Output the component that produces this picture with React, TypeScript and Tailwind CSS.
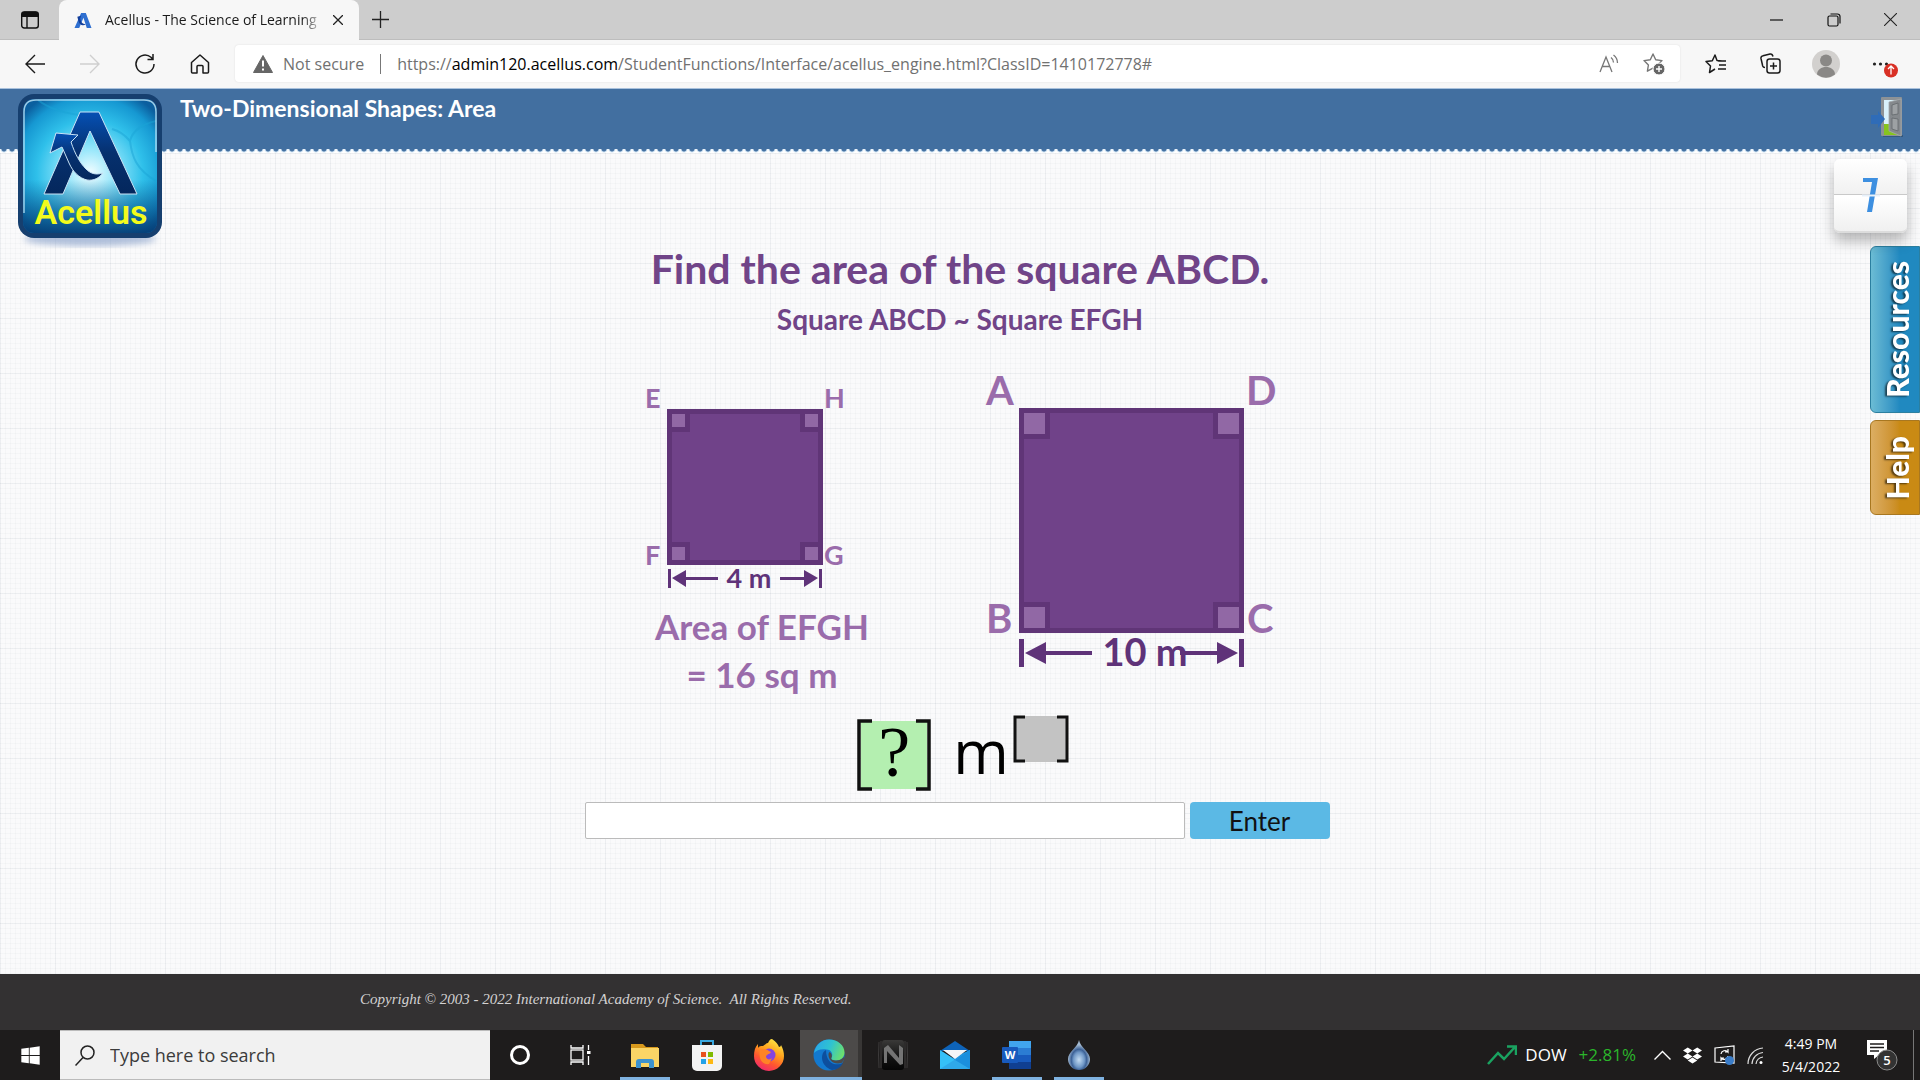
import React from "react";
import { FaDropbox, FaWindows } from "react-icons/fa";

/* ---------- browser chrome ---------- */

function AcellusMark({ className }: { className: string }) {
  return (
    <svg viewBox="0 0 20 18" className={className} aria-hidden="true">
      <path d="M8 1h5l6 16h-5L10.500 6 6 17H1z" fill="#2f6fd0" />
      <path d="M4 5l4-1-1 3c1 4 2 6 6 6-3 2-7 1-8-4z" fill="#123f9c" />
    </svg>
  );
}

function TabStrip() {
  return (
    <div className="flex h-10 items-stretch border-b border-[#bdbdbd] bg-[#cdcdcd]">
      <button aria-label="Tab actions" className="flex w-[59px] items-center justify-center">
        <svg width="20" height="20" viewBox="0 0 20 20" fill="none" stroke="#111">
          <rect x="1.700" y="2" width="16.600" height="16" rx="2.500" strokeWidth="1.400" />
          <path d="M2 4.500a2.500 2.500 0 0 1 2.500-2.500h11A2.500 2.500 0 0 1 18 4.500V6.500H2z" fill="#111" />
          <path d="M7 6v12" strokeWidth="1.400" />
        </svg>
      </button>
      <div className="-mb-px flex w-[300px] items-center rounded-t-lg bg-[#f7f7f7] pr-[7px] pl-3.5">
        <AcellusMark className="h-[17px] w-5 shrink-0" />
        <span className="ml-3 flex-1 overflow-hidden text-[14px] leading-5 whitespace-nowrap text-[#1b1b1b] [mask-image:linear-gradient(to_right,black_90%,transparent)]">
          Acellus - The Science of Learning
        </span>
        <button aria-label="Close tab" className="flex size-7 items-center justify-center">
          <svg width="10" height="10" viewBox="0 0 10 10" stroke="#222" strokeWidth="1.300">
            <path d="M0 0l10 10M10 0L0 10" />
          </svg>
        </button>
      </div>
      <button aria-label="New tab" className="flex w-[42px] items-center justify-center">
        <svg width="17" height="17" viewBox="0 0 17 17" stroke="#222" strokeWidth="1.300">
          <path d="M8.500 0v17M0 8.500h17" />
        </svg>
      </button>
      <div className="ml-auto flex pr-px">
        <button aria-label="Minimize" className="flex w-[57px] items-center justify-center">
          <svg width="13" height="2" viewBox="0 0 13 2"><path d="M0 1h13" stroke="#111" strokeWidth="1.200" /></svg>
        </button>
        <button aria-label="Restore" className="flex w-[57px] items-center justify-center">
          <svg width="14" height="14" viewBox="0 0 14 14" fill="none" stroke="#111" strokeWidth="1.200">
            <rect x="1" y="3" width="10" height="10" rx="1.500" />
            <path d="M3.500 1h7A2.500 2.500 0 0 1 13 3.500v7" />
          </svg>
        </button>
        <button aria-label="Close window" className="flex w-[57px] items-center justify-center">
          <svg width="13" height="13" viewBox="0 0 13 13" stroke="#222" strokeWidth="1.100"><path d="M0 0l13 13M13 0L0 13" /></svg>
        </button>
      </div>
    </div>
  );
}

function NavButton({ label, children }: { label: string; children: React.ReactNode }) {
  return (
    <button aria-label={label} className="flex w-[55px] items-center justify-center">
      {children}
    </button>
  );
}

function Toolbar() {
  return (
    <div className="flex h-[49px] items-stretch border-b border-[#a9c1dc] bg-[#f7f7f7] pt-[5px] pb-[6px] pl-[7px]">
      <div className="flex w-[228px]">
        <NavButton label="Back">
          <svg width="20" height="20" viewBox="0 0 20 20" fill="none" stroke="#1b1b1b" strokeWidth="1.400"><path d="M20 10H1M10 1L1 10l9 9" /></svg>
        </NavButton>
        <NavButton label="Forward">
          <svg width="20" height="20" viewBox="0 0 20 20" fill="none" stroke="#cfcfcf" strokeWidth="1.400"><path d="M0 10h19M10 1l9 9-9 9" /></svg>
        </NavButton>
        <NavButton label="Refresh">
          <svg width="22" height="22" viewBox="0 0 22 22" fill="none" stroke="#1b1b1b" strokeWidth="1.500"><path d="M20 11a9 9 0 1 1-3-6.700L19 6.500M19 1v5.500h-5.500" /></svg>
        </NavButton>
        <NavButton label="Home">
          <svg width="20" height="20" viewBox="0 0 20 20" fill="none" stroke="#1b1b1b" strokeWidth="1.500" strokeLinejoin="round"><path d="M1.500 8.500L10 1l8.500 7.500V18a1 1 0 0 1-1 1h-4.500v-6.500a1 1 0 0 0-1-1h-4a1 1 0 0 0-1 1V19H2.500a1 1 0 0 1-1-1z" /></svg>
        </NavButton>
      </div>
      <div className="flex flex-1 items-center rounded bg-white pr-1 pl-[18px] text-[16px] shadow-[0_0_2px_#ddd]">
        <svg width="20" height="18" viewBox="0 0 20 18" className="shrink-0" aria-hidden="true">
          <path d="M10 0.500L19.500 17.500H0.500z" fill="#666" stroke="#666" strokeLinejoin="round" />
          <path d="M10 5.500v6M10 13.500v2" stroke="#fff" strokeWidth="2" />
        </svg>
        <span className="ml-[10px] text-[#717171]">Not secure</span>
        <span className="mx-4 h-5 w-px bg-[#777]" />
        <div role="textbox" aria-label="Address" contentEditable suppressContentEditableWarning className="flex-1 whitespace-nowrap text-[#717171] outline-none">
          https://<span className="text-black">admin120.acellus.com</span>/StudentFunctions/Interface/acellus_engine.html?ClassID=1410172778#
        </div>
        <button aria-label="Read aloud" className="flex w-[45px] justify-center">
          <svg width="20" height="20" viewBox="0 0 20 20" fill="none" stroke="#777" strokeWidth="1.300">
            <path d="M1 18L7 3l6 15M3.500 12.500h7M12 3.500a6 6 0 0 1 2.500 5M14.500 1a10 10 0 0 1 4 8" />
          </svg>
        </button>
        <button aria-label="Add to favorites" className="flex w-[45px] justify-center">
          <svg width="22" height="22" viewBox="0 0 22 22" fill="none" stroke="#777" strokeWidth="1.400" strokeLinejoin="round">
            <path d="M10 1l2.700 5.700 6.300.900-4.500 4.400 1 6.200L10 15.200l-5.600 3 1-6.200L1 7.600l6.300-.900z" />
            <circle cx="16" cy="16" r="6" fill="#666" stroke="#fff" strokeWidth="1" />
            <path d="M16 13v6M13 16h6" stroke="#fff" />
          </svg>
        </button>
      </div>
      <div className="flex items-center pr-[5px] pl-[8px]">
        <NavButton label="Favorites">
          <svg width="21" height="20" viewBox="0 0 21 20" fill="none" stroke="#1b1b1b" strokeWidth="1.500" strokeLinejoin="round">
            <path d="M17 7l-5-.500L10 1 7.300 6.700 1 7.500 5.500 12l-1 6.500L10 15M13 7h8M14 11h7M13 15h8" />
          </svg>
        </NavButton>
        <NavButton label="Collections">
          <svg width="21" height="21" viewBox="0 0 21 21" fill="none" stroke="#1b1b1b" strokeWidth="1.500">
            <path d="M5 14.500c-1.500 0-2-.500-2.300-1.500L1 5.500C.700 4 1.500 3 3 2.700L10 1c1.500-.300 2.500.500 3 2.500" />
            <rect x="7" y="6" width="13" height="14" rx="2.500" />
            <path d="M13.500 9.500v7M10 13h7" />
          </svg>
        </NavButton>
        <NavButton label="Profile">
          <svg width="28" height="28" viewBox="0 0 28 28">
            <circle cx="14" cy="14" r="14" fill="#d2d0ce" />
            <circle cx="14" cy="10.500" r="6" fill="#8a8886" />
            <path d="M5 24.500C5 14.500 23 14.500 23 24.500Q14 31 5 24.500z" fill="#8a8886" />
          </svg>
        </NavButton>
        <button aria-label="Settings and more" className="flex w-[62px] justify-center">
          <svg width="28" height="28" viewBox="0 0 28 28">
            <circle cx="4.500" cy="14" r="1.600" fill="#222" />
            <circle cx="10.500" cy="14" r="1.600" fill="#222" />
            <circle cx="16.500" cy="14" r="1.600" fill="#222" />
            <circle cx="21" cy="20.500" r="7" fill="#d93025" />
            <path d="M21 24.500v-8M18 19l3-3 3 3" fill="none" stroke="#fff" strokeWidth="1.300" />
          </svg>
        </button>
      </div>
    </div>
  );
}

/* ---------- lesson page ---------- */

function AcellusLogo() {
  return (
    <svg viewBox="0 0 148 160" className="absolute top-1 left-4 h-[160px] w-[148px]" role="img" aria-label="Acellus">
      <defs>
        <radialGradient id="lg" cx="0.5" cy="0.55" r="0.66">
          <stop offset="0" stopColor="#f2fdff" />
          <stop offset="0.3" stopColor="#8ce4fa" />
          <stop offset="0.6" stopColor="#2fc0ea" />
          <stop offset="0.85" stopColor="#1698d2" />
          <stop offset="1" stopColor="#0b5f9f" />
        </radialGradient>
        <linearGradient id="la" x1="0" y1="0" x2="0" y2="1">
          <stop offset="0" stopColor="#0550b4" />
          <stop offset="0.5" stopColor="#06306e" />
          <stop offset="1" stopColor="#04275c" />
        </linearGradient>
        <linearGradient id="lb" x1="0" y1="0" x2="0" y2="1">
          <stop offset="0.6" stopColor="#06467f" stopOpacity="0" />
          <stop offset="1" stopColor="#053a72" stopOpacity="0.9" />
        </linearGradient>
        <filter id="ls"><feGaussianBlur stdDeviation="3" /></filter>
      </defs>
      <ellipse cx="74" cy="146" rx="66" ry="7" fill="#8fa6cc" opacity="0.7" filter="url(#ls)" />
      <rect x="2" y="1" width="144" height="144" rx="16" fill="#163f6f" />
      <rect x="7" y="6" width="134" height="134" rx="11" fill="url(#lg)" />
      <path d="M22 7c10 8 28 14 50 16M140 28c-18 4-24 12-26 20-5-6-10-10-18-12M114 48c2 16 6 28 26 40" fill="none" stroke="#1aa3d6" strokeWidth="2" opacity="0.5" />
      <rect x="7" y="6" width="134" height="134" rx="11" fill="url(#lb)" />
      <path d="M8 120V19Q8 7 20 7h108Q140 7 140 19v40" fill="none" stroke="#bfe6f7" strokeWidth="1.500" opacity="0.8" />
      <g stroke="#c9e3f5" strokeWidth="1" strokeLinejoin="round" fill="url(#la)">
        <path d="M64 19h19l38 82h-17L74 38 47 101H28z" />
        <path d="M40 40l22 2-7 7c4 12 9 21 15 27 5 5 10 6 17 4-4 5-9 8-16 7-8-2-14-8-18-17l-7-16-12 6z" />
      </g>
      <text x="75" y="131" textAnchor="middle" fontFamily="Roboto, sans-serif" fontWeight="600" fontSize="34" fill="#f3fb1c">Acellus</text>
    </svg>
  );
}

function ExitDoor() {
  return (
    <svg width="36" height="42" viewBox="0 0 36 42" aria-hidden="true">
      <rect x="13" y="39" width="20" height="2" fill="#2f4f70" opacity="0.7" />
      <rect x="11" y="1" width="21" height="39" rx="1" fill="#8d9296" />
      <rect x="14" y="4" width="15" height="25" fill="#d9f1fb" />
      <rect x="14" y="28" width="15" height="11" fill="#86c41e" />
      <path d="M19 6l12-3v37l-12-5z" fill="#85898d" stroke="#a5a9ac" strokeWidth="0.800" />
      <path d="M22 9l6-2v11l-6 1zM22 22l6 1v12l-6-2z" fill="#9da1a4" stroke="#63686c" strokeWidth="0.800" />
      <path d="M1 19h7v-4l7 8-7 9v-4H1z" fill="#2f6cb8" />
    </svg>
  );
}

function LessonHeader() {
  return (
    <header className="relative z-10 flex h-16 flex-col">
      <div className="flex flex-1 items-start justify-between bg-[#426fa0] pr-[14px] pl-[180px]">
        <h1 className="mt-[7px] font-['Lato',sans-serif] text-[23px] leading-6 font-bold text-white">
          Two-Dimensional Shapes: Area
        </h1>
        <button aria-label="Exit lesson" className="mt-[7px]">
          <ExitDoor />
        </button>
      </div>
      <div className="h-1 bg-[radial-gradient(circle_at_50%_0,#426fa0_2px,#cfe2f2_3px,transparent_4px)] bg-[length:8px_4px]" />
      <AcellusLogo />
    </header>
  );
}

type Square = { x: number; y: number; size: number; inset: number; corner: number; edge: number };

function SquareShape({ x, y, size, inset, corner, edge }: Square) {
  const far = size - inset - corner;
  const spots = [[inset, inset], [far, inset], [inset, far], [far, far]];
  return (
    <g>
      <rect x={x} y={y} width={size} height={size} fill="#704289" />
      {spots.map(([dx, dy]) => (
        <rect key={`${dx}-${dy}`} x={x + dx - edge / 2} y={y + dy - edge / 2} width={corner + edge} height={corner + edge} fill="#9168a5" stroke="#603577" strokeWidth={edge} />
      ))}
      <rect x={x + edge / 2} y={y + edge / 2} width={size - edge} height={size - edge} fill="none" stroke="#603577" strokeWidth={edge} />
    </g>
  );
}

function Figure() {
  return (
    <svg viewBox="630 360 660 345" className="mt-[21px] h-[345px] w-[660px]" fontFamily="Lato, sans-serif" fontWeight="700">
      <SquareShape x={667} y={409} size={156} inset={5} corner={13} edge={5} />
      <SquareShape x={1019} y={408} size={225} inset={5} corner={21} edge={5} />
      <g fill="#9a6cab" fontSize="27">
        <text x="645" y="408">E</text>
        <text x="824" y="408">H</text>
        <text x="645" y="565">F</text>
        <text x="824" y="565">G</text>
      </g>
      <g fill="#9a6cab" fontSize="40">
        <text x="986" y="405">A</text>
        <text x="1246" y="405">D</text>
        <text x="986" y="633">B</text>
        <text x="1247" y="633">C</text>
      </g>
      <g fill="#5f3379">
        <path d="M668 569h3v19h-3zM819 569h3v19h-3zM672 578l14-8v7h32v3h-32v7zM818 578l-14-8v7h-24v3h24v7z" />
        <path d="M1019 639h5v28h-5zM1239 639h5v28h-5zM1025 653l21-11v9h46v4h-46v9zM1238 653l-21-11v9h-37v4h37v9z" />
        <text x="749" y="588" fontSize="27" textAnchor="middle">4 m</text>
        <text x="1145" y="666" fontSize="38" textAnchor="middle">10 m</text>
      </g>
      <g fill="#9a6cab" fontSize="35" textAnchor="middle">
        <text x="762" y="640">Area of EFGH</text>
        <text x="762" y="688">= 16 sq m</text>
      </g>
    </svg>
  );
}

function AnswerExpression() {
  return (
    <div className="mt-[10px] flex h-[76px] items-start pl-[6px]" aria-label="Answer, metres to a power">
      <div className="relative mt-1 h-[72px] w-[74px] bg-[#b4efb0] bg-clip-content px-1 py-[2px] text-center font-['Liberation_Serif',serif] text-[72px] leading-[62px] text-black">
        <svg viewBox="0 0 74 72" className="absolute inset-0 size-full" fill="none" stroke="#111" strokeWidth="3.500">
          <path d="M15 2H2v68h13M59 2h13v68H59" />
        </svg>
        ?
      </div>
      <span className="ml-[22px] font-['Open_Sans',sans-serif] text-[60px] leading-[72px] text-black">m</span>
      <div className="relative ml-1 h-[48px] w-[56px] bg-[#c3c3c3] bg-clip-content px-[3px] py-px">
        <svg viewBox="0 0 56 48" className="absolute inset-0 size-full" fill="none" stroke="#111" strokeWidth="3">
          <path d="M12 2H2v44h10M44 2h10v44H44" />
        </svg>
      </div>
    </div>
  );
}

function Counter() {
  return (
    <div className="relative mt-[6px] mr-[13px] w-[73px] rounded-md shadow-[0_8px_14px_rgba(0,0,0,0.28)]">
      <div className="h-[36px] rounded-t-md border-b border-[#c9c9c9] bg-gradient-to-b from-white to-[#f1f1f1]" />
      <div className="h-[38px] rounded-b-md border-t-2 border-b-2 border-white border-b-[#dcdcdc] bg-gradient-to-b from-white to-[#f0f0f0]" />
      <svg viewBox="0 0 73 74" className="absolute inset-0 size-full" role="img" aria-label="7">
        <path d="M29 19h15l-6 34h-5l5-30h-9z" fill="#3d8fe0" />
        <path d="M28 36.500h18" stroke="#e8f1fa" strokeWidth="2" />
      </svg>
    </div>
  );
}

function SideTabs() {
  const tab =
    "flex w-[50px] items-center justify-center rounded-l-md border pl-1 font-['Lato',sans-serif] text-[30px] leading-8 font-black text-white";
  const label = "rotate-180 [writing-mode:vertical-rl] [text-shadow:-1px_-2px_2px_rgba(0,0,0,0.6)]";
  return (
    <div className="mt-[13px] flex flex-col gap-[7px]">
      <button className={`${tab} h-[167px] border-[#2b7fa0] bg-gradient-to-r from-[#6bbcd4] to-[#2089c0] to-60%`}>
        <span className={label}>Resources</span>
      </button>
      <button className={`${tab} h-[95px] border-[#a87720] bg-gradient-to-r from-[#dcae62] to-[#c98a14] to-60%`}>
        <span className={label}>Help</span>
      </button>
    </div>
  );
}

function Lesson() {
  return (
    <main className="grid flex-1 grid-cols-[1fr_auto_1fr] bg-[#fafafb] bg-[linear-gradient(to_right,rgba(150,160,175,0.09)_1px,transparent_1px),linear-gradient(to_bottom,rgba(150,160,175,0.09)_1px,transparent_1px),linear-gradient(to_right,rgba(150,160,175,0.05)_1px,transparent_1px),linear-gradient(to_bottom,rgba(150,160,175,0.05)_1px,transparent_1px)] bg-[size:55px_55px,55px_55px,5px_5px,5px_5px]">
      <form className="col-start-2 flex flex-col items-center pt-[92px]" onSubmit={(e) => e.preventDefault()}>
        <div className="text-center font-['Lato',sans-serif] font-bold text-[#704488]">
          <h2 className="text-[41px] leading-12">Find the area of the square ABCD.</h2>
          <p className="mt-[6px] text-[28px] leading-10">Square ABCD ~ Square EFGH</p>
        </div>
        <Figure />
        <AnswerExpression />
        <div className="mt-[11px] flex gap-[5px] self-start pr-[6px] -ml-[43px] -mr-[43px]">
          <input aria-label="Your answer" className="h-[37px] w-[600px] rounded-xs border border-[#bbb] bg-white px-2 text-2xl outline-none" />
          <button className="h-[37px] w-[140px] rounded bg-[#5bb9e5] font-['Lato',sans-serif] text-[26px] leading-8 text-[#111]">Enter</button>
        </div>
      </form>
      <aside className="flex flex-col items-end">
        <Counter />
        <SideTabs />
      </aside>
    </main>
  );
}

/* ---------- taskbar ---------- */

const icons: Record<string, React.ReactNode> = {
  "File Explorer": (
    <svg width="30" height="30" viewBox="0 0 30 30">
      <path d="M1 4h12l3 3h12v5H1z" fill="#d8991c" />
      <path d="M1 8h28v19H1z" fill="#fbd566" />
      <path d="M6 28v-6a3 3 0 0 1 3-3h12a3 3 0 0 1 3 3v6h-5v-5h-8v5z" fill="#3e93cf" />
    </svg>
  ),
  "Microsoft Store": (
    <svg width="30" height="32" viewBox="0 0 30 32">
      <path d="M9 7V2h12v5" fill="none" stroke="#39a8e0" strokeWidth="2" />
      <path d="M0 6h30v21a5 5 0 0 1-5 5H5a5 5 0 0 1-5-5z" fill="#f3f3f3" />
      <path d="M9 13h5v5H9z" fill="#e8501f" /><path d="M16 13h5v5h-5z" fill="#7fba00" />
      <path d="M9 20h5v5H9z" fill="#22a2e8" /><path d="M16 20h5v5h-5z" fill="#fdb813" />
    </svg>
  ),
  Firefox: (
    <svg width="30" height="32" viewBox="0 0 30 32">
      <defs>
        <linearGradient id="ff" x1="0.8" y1="0" x2="0.3" y2="1">
          <stop offset="0" stopColor="#fff04a" /><stop offset="0.4" stopColor="#ffa01c" /><stop offset="0.7" stopColor="#ff5630" /><stop offset="1" stopColor="#f1286f" />
        </linearGradient>
      </defs>
      <path d="M18 0c4 3 6 5 7 8 1 0 2-1 2-2 2 4 3 7 3 11a15 15 0 0 1-30 0c0-5 1-9 4-12v4c1-2 3-2 5-2 2-1 3-3 5-3 1-2 2-4 4-4z" fill="url(#ff)" />
      <circle cx="15" cy="16" r="6.500" fill="#8444e0" />
      <path d="M6 11c3-2 7-1 9 1l2 1c-2 3-5 2-5 5 1 3 4 3 6 1l-3 6c-6 1-11-4-9-14z" fill="#ff8426" />
    </svg>
  ),
  "Microsoft Edge": (
    <svg width="32" height="32" viewBox="0 0 32 32">
      <defs>
        <linearGradient id="eg" x1="0" y1="0.3" x2="1" y2="0.6"><stop offset="0" stopColor="#2aa8e8" /><stop offset="0.5" stopColor="#2fc3d0" /><stop offset="1" stopColor="#6ee06a" /></linearGradient>
      </defs>
      <circle cx="16" cy="16" r="15.500" fill="#1379cf" />
      <path d="M1 14C3 5 9 .500 16 .500c9 0 15.500 6 15.500 13 0 5-4 8-8 8-4 0-6-1-5-3 2-3 0-8-5-8-6-1-10 1-12.500 3.500z" fill="url(#eg)" />
      <path d="M13 11c-6 3-6 16 6 20 5 0 9-3 11-7-6 3-17 2-17-13z" fill="#0d4f9e" />
      <path d="M18.500 18.500c-1 2 1 3 5 3 3 0 5-1 7.500-3.500l.500 1.500c-1 2-2 3.500-3 4.500-8 2-13-3-13-8 0-1 0-2 1-3 2 1 3 4 2 5.500z" fill="#4c4b4a" />
    </svg>
  ),
  "N app": (
    <svg width="30" height="32" viewBox="0 0 30 32">
      <defs><linearGradient id="nb" x1="0" y1="0" x2="0" y2="1"><stop offset="0" stopColor="#3a3938" /><stop offset="0.6" stopColor="#121212" /><stop offset="1" stopColor="#050505" /></linearGradient></defs>
      <rect x="4" y="1" width="22" height="30" rx="3" fill="url(#nb)" />
      <path d="M1 3q-1 13 0 26M29 3q1 13 0 26M3 2v27M27 2v27" stroke="#3d3b3b" fill="none" />
      <path d="M6 24V9l4-3 11 13V6l4 3v16l-3 1L9 12v12z" fill="#747474" />
    </svg>
  ),
  Mail: (
    <svg width="30" height="30" viewBox="0 0 30 30">
      <path d="M0 11L15 1l15 10z" fill="#0e63b8" />
      <path d="M0 10l30 19H0z" fill="#35c0f8" /><path d="M30 10v19L12 18z" fill="#1b8fdd" />
      <path d="M0 29L30 10v19z" fill="#2fa9ea" /><path d="M15 20l15 9V10z" fill="#1b8fdd" />
      <path d="M3 10h24L15 19z" fill="#f4f6f8" />
    </svg>
  ),
  Word: (
    <svg width="30" height="30" viewBox="0 0 30 30">
      <path d="M7 1h22v7H7z" fill="#41a5ee" /><path d="M7 8h22v7H7z" fill="#2b7cd3" />
      <path d="M7 15h22v7H7z" fill="#185abd" /><path d="M7 22h22v7H7z" fill="#103f91" />
      <rect x="0" y="7" width="16" height="16" rx="1" fill="#185abd" />
      <text x="8" y="19" textAnchor="middle" fontFamily="Open Sans, sans-serif" fontWeight="700" fontSize="11" fill="#fff">W</text>
    </svg>
  ),
  "Water drop": (
    <svg width="24" height="30" viewBox="0 0 24 30">
      <defs><radialGradient id="wd" cx="0.5" cy="0.66" r="0.5"><stop offset="0" stopColor="#c4dcf2" /><stop offset="0.5" stopColor="#6f97c6" /><stop offset="0.7" stopColor="#3c6196" /><stop offset="1" stopColor="#a3bad2" /></radialGradient></defs>
      <path d="M12 0c1 7 11 12 11 19a11 11 0 0 1-22 0C1 12 11 7 12 0z" fill="url(#wd)" />
    </svg>
  ),
};

const apps = [
  { name: "File Explorer", open: true },
  { name: "Microsoft Store" },
  { name: "Firefox" },
  { name: "Microsoft Edge", active: true },
  { name: "N app" },
  { name: "Mail" },
  { name: "Word", open: true },
  { name: "Water drop", open: true },
];

function AppButton({ name, open, active }: { name: string; open?: boolean; active?: boolean }) {
  return (
    <button
      aria-label={name}
      className={`relative flex w-[62px] items-center justify-center ${active ? "border-r-4 border-[#383635] bg-[#4c4a49]" : ""}`}
    >
      {icons[name]}
      {active && <span className="absolute -right-1 bottom-0 left-0 h-[3px] bg-[#7fb2e0]" />}
      {open && <span className="absolute inset-x-[6px] bottom-0 h-[3px] bg-[#7fb2e0]" />}
    </button>
  );
}

function Taskbar() {
  return (
    <div className="flex h-[50px] items-stretch bg-[#1e1c1c] text-white">
      <button aria-label="Start" className="flex w-[60px] items-center justify-center"><FaWindows size={21} /></button>
      <label className="flex w-[430px] items-center border-y border-[#bbb] bg-[#f1f1f1] pl-[15px]">
        <svg width="20" height="21" viewBox="0 0 20 21" fill="none" stroke="#222" strokeWidth="1.500" className="shrink-0">
          <circle cx="12.500" cy="7.500" r="6.500" /><path d="M8 12.500L.500 20.500" />
        </svg>
        <input type="search" aria-label="Search" placeholder="Type here to search" className="ml-[15px] w-0 flex-1 bg-transparent text-[18px] outline-none placeholder:text-[#3b3b3b]" />
      </label>
      <button aria-label="Cortana" className="flex w-[60px] items-center justify-center">
        <span className="size-5 rounded-full border-[3px] border-white" />
      </button>
      <button aria-label="Task view" className="mr-[4px] flex w-[60px] items-center justify-center">
        <svg width="21" height="20" viewBox="0 0 21 20" fill="none" stroke="#fff" strokeWidth="1.300">
          <rect x="1" y="5" width="12" height="10" /><path d="M1 0v3h12V0M1 20v-3h12v3M18.500 0v5M18.500 11v9" /><path d="M17 6h3.500v3H17z" fill="#fff" stroke="none" />
        </svg>
      </button>
      {apps.map((a) => <AppButton key={a.name} {...a} />)}
      <div className="ml-auto flex items-center">
        <button className="mr-[18px] flex items-center text-[17px]">
          <svg width="30" height="20" viewBox="0 0 30 20" fill="none" stroke="#1aa260" strokeWidth="2.500" className="mr-2"><path d="M1 19L11 8l6 6L28 2M20 1.500h9V10" /></svg>
          DOW <span className="ml-3 text-[#2bb52b]">+2.81%</span>
        </button>
        <button aria-label="Show hidden icons" className="mr-3">
          <svg width="17" height="10" viewBox="0 0 17 10" fill="none" stroke="#fff" strokeWidth="1.400"><path d="M.500 9.500l8-8 8 8" /></svg>
        </button>
        <button aria-label="Dropbox" className="mr-3"><FaDropbox size={19} /></button>
        <button aria-label="Sync" className="mr-3">
          <svg width="21" height="20" viewBox="0 0 21 20" fill="none" stroke="#fff" strokeWidth="1.200">
            <path d="M1 3l19-2v17L1 17z" /><path d="M7 9a4 4 0 0 1 7-2V4M14 7h-3M14 11a4 4 0 0 1-7 2v3M7 13h3" />
            <circle cx="15.500" cy="15.500" r="4.500" fill="#3a7cc8" stroke="none" />
          </svg>
        </button>
        <button aria-label="Network" className="mr-4">
          <svg width="16" height="17" viewBox="0 0 16 17" fill="none" stroke="#ddd" strokeWidth="1.200">
            <path d="M1 17A16 16 0 0 1 16 1M5 17A12 12 0 0 1 16 5.500M9 17a8 8 0 0 1 7-7" /><circle cx="14" cy="15.500" r="1.500" fill="#fff" stroke="none" />
          </svg>
        </button>
        <div className="w-[64px] text-center text-[14px] leading-[23px] whitespace-nowrap">
          <div>4:49 PM</div>
          <div>5/4/2022</div>
        </div>
        <button aria-label="Notifications, 5 new" className="mr-[14px] ml-6 flex items-center">
          <svg width="32" height="32" viewBox="0 0 32 32">
            <path d="M0 1h20v15h-8l-5 4v-4H0z" fill="#fff" />
            <path d="M3 5h14M3 8.500h14M3 12h9" stroke="#1e1c1c" strokeWidth="1.300" />
            <circle cx="20" cy="21" r="10" fill="#333" stroke="#8a8a8a" />
            <text x="20" y="26" textAnchor="middle" fontFamily="Open Sans, sans-serif" fontWeight="600" fontSize="13" fill="#fff">5</text>
          </svg>
        </button>
        <span className="mr-[6px] h-[50px] w-px bg-[#777]" />
      </div>
    </div>
  );
}

export default function App() {
  return (
    <div className="flex min-h-screen flex-col font-['Open_Sans',sans-serif]">
      <TabStrip />
      <Toolbar />
      <LessonHeader />
      <Lesson />
      <footer className="h-14 bg-[#333132] pl-[360px] font-['Liberation_Serif',serif] text-[15px] leading-[50px] text-[#d4d2d2] italic">
        Copyright © 2003 - 2022 International Academy of Science.&nbsp; All Rights Reserved.
      </footer>
      <Taskbar />
    </div>
  );
}
